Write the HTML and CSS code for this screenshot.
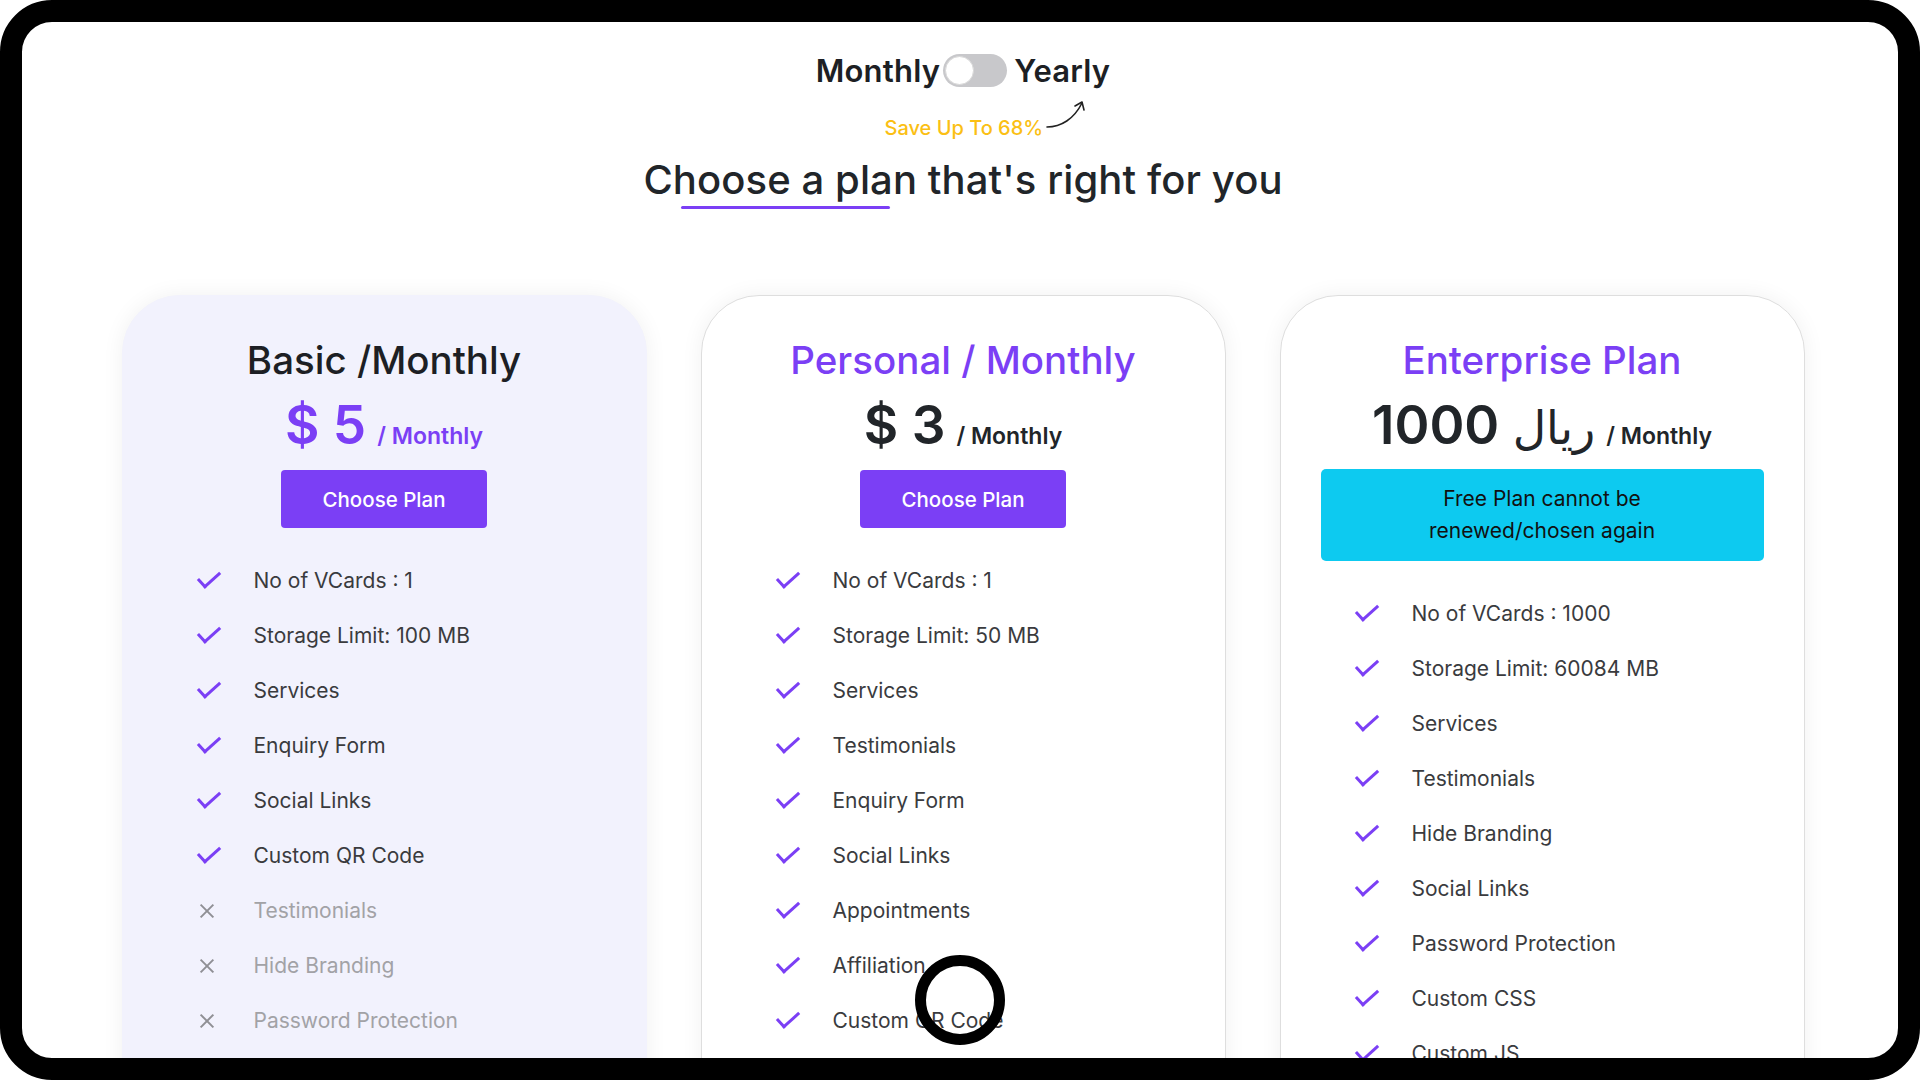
FILE: index.html
```html
<!DOCTYPE html>
<html lang="en">
<head>
    <meta charset="UTF-8">
    <meta name="viewport" content="width=device-width, initial-scale=1.0">
    <title>Pricing</title>
    <link rel="stylesheet" href="styles.css">
</head>
<body>
    <div class="frame">
        <div class="pricing-head">
            <div class="billing-switch">
                <span class="switch-label">Monthly</span>
                <span class="switch" aria-hidden="true"><span class="knob"></span></span>
                <span class="switch-label">Yearly</span>
            </div>
            <div class="save-note">
                Save Up To 68%
                <svg class="save-arrow" width="42" height="34" viewBox="0 0 42 34" fill="none" stroke="#222" stroke-width="1.6" stroke-linecap="round" stroke-linejoin="round">
                    <path d="M2 29 C 16 29, 29 21, 37 5"/>
                    <path d="M30 8 L37 4 L39 12"/>
                </svg>
            </div>
            <div class="heading-wrap">
                <h1 class="heading">Choose a plan that's right for you</h1>
                <div class="heading-line"></div>
            </div>
        </div>

        <div class="plans">
            <!-- Basic -->
            <div class="plan plan-active">
                <h2 class="plan-title">Basic /Monthly</h2>
                <div class="plan-price price-purple">
                    <span class="amount">$ 5</span>
                    <span class="period">/ Monthly</span>
                </div>
                <button type="button" class="choose-btn">Choose Plan</button>
                <ul class="features">
                    <li><span class="icon check"></span>No of VCards : 1</li>
                    <li><span class="icon check"></span>Storage Limit: 100 MB</li>
                    <li><span class="icon check"></span>Services</li>
                    <li><span class="icon check"></span>Enquiry Form</li>
                    <li><span class="icon check"></span>Social Links</li>
                    <li><span class="icon check"></span>Custom QR Code</li>
                    <li class="off"><span class="icon cross"></span>Testimonials</li>
                    <li class="off"><span class="icon cross"></span>Hide Branding</li>
                    <li class="off"><span class="icon cross"></span>Password Protection</li>
                </ul>
            </div>

            <!-- Personal -->
            <div class="plan">
                <h2 class="plan-title title-purple">Personal / Monthly</h2>
                <div class="plan-price">
                    <span class="amount">$ 3</span>
                    <span class="period">/ Monthly</span>
                </div>
                <button type="button" class="choose-btn">Choose Plan</button>
                <ul class="features">
                    <li><span class="icon check"></span>No of VCards : 1</li>
                    <li><span class="icon check"></span>Storage Limit: 50 MB</li>
                    <li><span class="icon check"></span>Services</li>
                    <li><span class="icon check"></span>Testimonials</li>
                    <li><span class="icon check"></span>Enquiry Form</li>
                    <li><span class="icon check"></span>Social Links</li>
                    <li><span class="icon check"></span>Appointments</li>
                    <li><span class="icon check"></span>Affiliation</li>
                    <li><span class="icon check"></span>Custom QR Code</li>
                </ul>
            </div>

            <!-- Enterprise -->
            <div class="plan">
                <h2 class="plan-title title-purple">Enterprise Plan</h2>
                <div class="plan-price">
                    <span class="amount">1000 <span class="currency">ريال</span></span>
                    <span class="period">/ Monthly</span>
                </div>
                <div class="plan-notice">Free Plan cannot be<br>renewed/chosen again</div>
                <ul class="features">
                    <li><span class="icon check"></span>No of VCards : 1000</li>
                    <li><span class="icon check"></span>Storage Limit: 60084 MB</li>
                    <li><span class="icon check"></span>Services</li>
                    <li><span class="icon check"></span>Testimonials</li>
                    <li><span class="icon check"></span>Hide Branding</li>
                    <li><span class="icon check"></span>Social Links</li>
                    <li><span class="icon check"></span>Password Protection</li>
                    <li><span class="icon check"></span>Custom CSS</li>
                    <li><span class="icon check"></span>Custom JS</li>
                </ul>
            </div>
        </div>

        <!-- touch indicator -->
        <div class="touch-ring"></div>
    </div>
</body>
</html>
```

FILE: styles.css
```css
* {
    box-sizing: border-box;
}

body {
    margin: 0;
    background: #fff;
    font-family: Inter, "DejaVu Sans", sans-serif;
    color: #212529;
}

.frame {
    position: relative;
    width: 1920px;
    height: 1080px;
    border: 22px solid #000;
    border-radius: 52px;
    overflow: hidden;
    background: #fff;
}

/* Header */
.pricing-head {
    padding-top: 28px;
    text-align: center;
    padding-left: 6px;
}

.billing-switch {
    display: flex;
    justify-content: center;
    align-items: center;
    height: 40px;
}

.switch-label {
    font-size: 31px;
    font-weight: 600;
    letter-spacing: 0.2px;
    color: #1d1f24;
}

.switch {
    display: inline-flex;
    align-items: center;
    width: 64px;
    height: 33px;
    margin: 0 7px 0 3px;
    padding: 2px;
    border-radius: 17px;
    background: #c8c8cb;
}

.knob {
    width: 29px;
    height: 29px;
    border-radius: 50%;
    background: #fff;
    border: 1px solid #d8d8d8;
}

.save-note {
    margin-top: 25px;
    height: 26px;
    line-height: 26px;
    font-size: 20px;
    font-weight: 500;
    color: #fbbf14;
    padding-left: 46px;
}

.save-arrow {
    vertical-align: 3px;
    margin: -20px 0 0 -3px;
}

.heading-wrap {
    display: inline-block;
    margin-top: 15px;
    text-align: left;
}

.heading {
    margin: 0;
    font-size: 40px;
    line-height: 48px;
    font-weight: 500;
    letter-spacing: 0.1px;
    color: #212529;
}

.heading-line {
    width: 209px;
    height: 3px;
    margin: 2px 0 0 38px;
    background: #7b3ff5;
    border-radius: 2px;
}

/* Plan cards */
.plans {
    display: flex;
    justify-content: center;
    gap: 54px;
    margin-top: 86px;
    padding-left: 6px;
}

.plan {
    width: 525px;
    height: 900px;
    padding-top: 41px;
    text-align: center;
    background: #fff;
    border: 1px solid #dedede;
    border-radius: 58px;
    box-shadow: 0 0 22px rgba(0, 0, 0, 0.06);
}

.plan-active {
    background: #f2f2fd;
    border-color: #f2f2fd;
}

.plan-title {
    margin: 0;
    font-size: 38.5px;
    line-height: 46px;
    font-weight: 500;
    color: #1d1f24;
}

.title-purple {
    color: #7b3ff5;
}

.plan-price {
    display: flex;
    justify-content: center;
    align-items: baseline;
    gap: 11px;
    margin-top: 12px;
    height: 60px;
    line-height: 60px;
    color: #212529;
}

.price-purple {
    color: #7b3ff5;
}

.amount {
    font-size: 53px;
    font-weight: 600;
}

.currency {
    font-weight: 400;
    font-size: 46px;
}

.period {
    font-size: 23px;
    font-weight: 600;
}

.choose-btn {
    display: block;
    width: 206px;
    height: 58px;
    margin: 15px auto 0;
    padding: 0;
    border: none;
    border-radius: 4px;
    background: #7b3ff5;
    color: #fff;
    font-family: inherit;
    font-size: 20.5px;
    font-weight: 500;
    cursor: pointer;
}

.plan-notice {
    width: 443px;
    margin: 14px auto 0;
    padding: 14px 10px;
    border-radius: 5px;
    background: #0dcaf0;
    color: #111;
    font-size: 21px;
    line-height: 32px;
}

.features {
    list-style: none;
    margin: 25px 0 0;
    padding: 0 0 0 72px;
    text-align: left;
}

.features li {
    display: flex;
    align-items: center;
    height: 55px;
    font-size: 21px;
    color: #3a3b3e;
}

.features li.off {
    color: #a2a2a6;
}

.icon {
    position: relative;
    width: 24px;
    height: 24px;
    margin-right: 35px;
    flex-shrink: 0;
}

.check::before {
    content: "";
    position: absolute;
    left: 3px;
    top: 2px;
    width: 19px;
    height: 9px;
    border-left: 3px solid #7b3ff5;
    border-bottom: 3px solid #7b3ff5;
    transform: rotate(-42deg);
}

.cross::before,
.cross::after {
    content: "";
    position: absolute;
    left: 3px;
    top: 11px;
    width: 18px;
    height: 2px;
    background: #8f8f94;
    transform: rotate(45deg);
}

.cross::after {
    transform: rotate(-45deg);
}

.touch-ring {
    position: absolute;
    left: 893px;
    top: 933px;
    width: 90px;
    height: 90px;
    border: 11px solid #000;
    border-radius: 50%;
}
```
